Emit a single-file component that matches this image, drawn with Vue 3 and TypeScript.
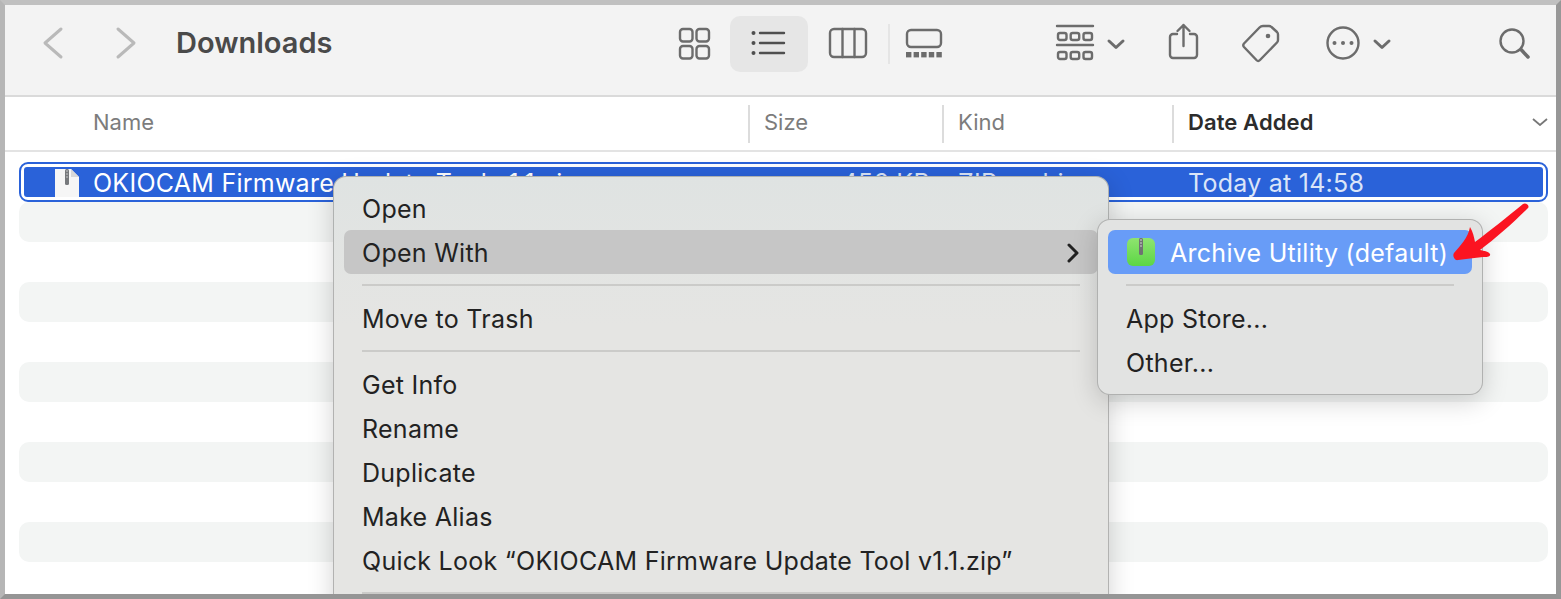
<script setup lang="ts">
type MenuEntry = { label?: string; active?: boolean; submenu?: boolean; separator?: boolean }

const menuItems: MenuEntry[] = [
  { label: 'Open' },
  { label: 'Open With', active: true, submenu: true },
  { separator: true },
  { label: 'Move to Trash' },
  { separator: true },
  { label: 'Get Info' },
  { label: 'Rename' },
  { label: 'Duplicate' },
  { label: 'Make Alias' },
  { label: 'Quick Look “OKIOCAM Firmware Update Tool v1.1.zip”' },
  { separator: true },
]

const emptyRows = Array.from({ length: 10 }, (_, i) => i)
</script>

<template>
  <div class="frame">
    <header class="toolbar">
      <svg class="ic nav-back" width="26" height="44" viewBox="0 0 26 44"><path d="M21 8 5 22l16 14" class="nav" /></svg>
      <svg class="ic nav-fwd" width="26" height="44" viewBox="0 0 26 44"><path d="m5 8 16 14L5 36" class="nav" /></svg>
      <h1 class="title">Downloads</h1>

      <svg class="ic t-grid" width="38" height="44" viewBox="0 0 38 44">
        <rect x="5" y="8" width="12.5" height="12.5" rx="3" />
        <rect x="21.5" y="8" width="12.5" height="12.5" rx="3" />
        <rect x="5" y="25" width="12.5" height="12.5" rx="3" />
        <rect x="21.5" y="25" width="12.5" height="12.5" rx="3" />
      </svg>
      <div class="list-btn">
        <svg class="ic dark" width="38" height="44" viewBox="0 0 38 44">
          <circle class="fill" cx="3.5" cy="11" r="2" />
          <circle class="fill" cx="3.5" cy="21" r="2" />
          <circle class="fill" cx="3.5" cy="31" r="2" />
          <path d="M10 11h24M10 21h24M10 31h24" />
        </svg>
      </div>
      <svg class="ic t-cols" width="46" height="44" viewBox="0 0 46 44">
        <rect x="5" y="8" width="36" height="28" rx="4" />
        <path d="M17.5 8v28M29.5 8v28" />
      </svg>
      <span class="tb-divider"></span>
      <svg class="ic t-gallery" width="46" height="44" viewBox="0 0 46 44">
        <rect x="6" y="9" width="34" height="17" rx="4" />
        <g class="fill">
          <rect x="5" y="31" width="5.4" height="5.4" />
          <rect x="12.6" y="31" width="5.4" height="5.4" />
          <rect x="20.2" y="31" width="5.4" height="5.4" />
          <rect x="27.8" y="31" width="5.4" height="5.4" />
          <rect x="35.4" y="31" width="5.4" height="5.4" />
        </g>
      </svg>

      <svg class="ic t-group" width="44" height="44" viewBox="0 0 44 44">
        <path d="M4 5h36M4 24h36" />
        <rect x="5" y="12" width="8.5" height="7" rx="2" />
        <rect x="17.7" y="12" width="8.5" height="7" rx="2" />
        <rect x="30.5" y="12" width="8.5" height="7" rx="2" />
        <rect x="5" y="31" width="8.5" height="7" rx="2" />
        <rect x="17.7" y="31" width="8.5" height="7" rx="2" />
        <rect x="30.5" y="31" width="8.5" height="7" rx="2" />
      </svg>
      <svg class="ic t-chev" width="24" height="44" viewBox="0 0 24 44"><path d="m5 20 7 6.5 7-6.5" class="chev" /></svg>

      <svg class="ic t-share" width="37" height="44" viewBox="0 0 37 44">
        <path d="M12 13H8a3 3 0 0 0-3 3v18a3 3 0 0 0 3 3h21a3 3 0 0 0 3-3V16a3 3 0 0 0-3-3h-4" />
        <path d="M18.5 25V4M12.5 10l6-6 6 6" />
      </svg>
      <svg class="ic t-tag" width="45" height="44" viewBox="0 0 45 44">
        <path d="M25 5h6q1.500 0 2.500 1l5.500 5q1 1 1 2.500V19q0 1.500-1 2.500L22 39q-1.800 1.800-3.600 0L6 26q-1.500-1.800 0-3.500L21.500 6.500Q23 5 25 5Z" />
        <circle class="fill" cx="30" cy="15" r="2.300" />
      </svg>
      <svg class="ic t-more" width="41" height="44" viewBox="0 0 41 44">
        <circle cx="21" cy="22" r="15.500" />
        <circle class="fill" cx="12.500" cy="22" r="2" />
        <circle class="fill" cx="21" cy="22" r="2" />
        <circle class="fill" cx="29.500" cy="22" r="2" />
      </svg>
      <svg class="ic t-chev2" width="24" height="44" viewBox="0 0 24 44"><path d="m5 20 7 6.500 7-6.500" class="chev" /></svg>
      <svg class="ic t-search" width="39" height="44" viewBox="0 0 39 44">
        <circle cx="17" cy="20" r="11.500" />
        <path d="m26 28.500 7 7.500" class="handle" />
      </svg>
    </header>

    <div class="columns">
      <div class="col col-name">Name</div>
      <div class="col col-size">Size</div>
      <div class="col col-kind">Kind</div>
      <div class="col col-date">
        <span>Date Added</span>
        <svg width="16" height="8" viewBox="0 0 16 8"><path d="m1 1 7 6 7-6" /></svg>
      </div>
    </div>

    <div class="list">
      <div class="selected">
        <div class="selected-bar">
          <div class="cell-name">
            <svg class="file" width="24" height="28" viewBox="0 0 24 28">
              <path d="M0 0h16l8 8v20H0Z" fill="#f6f6f6" />
              <path d="M16 0l8 8h-8Z" fill="#d8d8d8" />
              <rect x="10" y="0" width="4" height="16" rx="1.500" fill="#77797c" />
              <path d="M11 2h2M11 5h2M11 8h2" stroke="#c8c8c8" stroke-width="1" />
            </svg>
            <span>OKIOCAM Firmware Update Tool v1.1.zip</span>
          </div>
          <div class="cell-size">456 KB</div>
          <div class="cell-kind">ZIP archive</div>
          <div class="cell-date">Today at 14:58</div>
        </div>
      </div>
      <div v-for="i in emptyRows" :key="i" class="row" :class="{ stripe: i % 2 === 0 }"></div>
    </div>

    <div class="menu main-menu">
      <template v-for="(item, i) in menuItems" :key="i">
        <div v-if="item.separator" class="sep"></div>
        <div v-else class="item" :class="{ active: item.active }">
          <span>{{ item.label }}</span>
          <svg v-if="item.submenu" class="sub-arrow" width="14" height="20" viewBox="0 0 14 20"><path d="m3 2 8 8-8 8" /></svg>
        </div>
      </template>
    </div>

    <div class="menu sub-menu">
      <div class="item chosen">
        <svg class="zip" width="30" height="30" viewBox="0 0 30 30">
          <defs>
            <linearGradient id="zipGreen" x1="0" y1="0" x2="0" y2="1">
              <stop offset="0" stop-color="#8fe46f" />
              <stop offset="1" stop-color="#5cd645" />
            </linearGradient>
          </defs>
          <rect width="28" height="28" x="1" y="1" rx="6" fill="url(#zipGreen)" />
          <rect x="13" y="1" width="4" height="17" rx="1.500" fill="#6f7272" />
          <path d="M14 3h2M14 6h2M14 9h2" stroke="#cfcfcf" stroke-width="1" />
        </svg>
        <span class="chosen-label">Archive Utility (default)</span>
      </div>
      <div class="sep"></div>
      <div class="item">App Store...</div>
      <div class="item">Other...</div>
    </div>

    <svg class="arrow" width="84" height="66" viewBox="0 0 84 66">
      <path
        d="M4 53C10 46 18 38 20 27c3 5 4 10 5 15C40 31 58 16 73 4c3-2 7 2 5 4C63 23 46 38 30 50c4 1 8 1 10 4 1 3-4 3-7 3-9 1-17 2-25 3-3 1-6-4-4-7Z"
        fill="#fb1421"
      />
    </svg>
  </div>
</template>

<style>
html,
body {
  margin: 0;
  background: #fff;
}
</style>

<style scoped>
.frame {
  position: relative;
  box-sizing: border-box;
  width: 1561px;
  height: 599px;
  overflow: hidden;
  background: #fff;
  border-style: solid;
  border-width: 5px;
  border-color: #c0c0c0 #979797 #959595 #b6b6b6;
  font-family: Inter, "Liberation Sans", sans-serif;
}

/* toolbar */
.toolbar {
  display: flex;
  align-items: center;
  box-sizing: border-box;
  height: 92px;
  padding: 0 0 14px 35px;
  background: #f3f3f3;
  border-bottom: 2px solid #dadada;
}
.title {
  width: 491px;
  margin: 0 0 2px 37px;
  font-size: 29px;
  font-weight: 600;
  color: #4a4a4a;
}
.ic {
  flex: none;
  fill: none;
  stroke: #6c6c6c;
  stroke-width: 2.4;
  stroke-linecap: round;
  stroke-linejoin: round;
}
.ic .fill {
  fill: #6c6c6c;
  stroke: none;
}
.ic .nav {
  stroke: #b9b9b9;
  stroke-width: 3;
}
.ic .chev {
  stroke-width: 3;
}
.ic .handle {
  stroke-width: 3.5;
}
.ic.dark {
  stroke: #4f4f4f;
}
.ic.dark .fill {
  fill: #4f4f4f;
}
.nav-fwd { margin-left: 47px; }
.t-grid { margin-left: 8px; }
.list-btn {
  display: flex;
  flex: none;
  justify-content: center;
  align-items: center;
  width: 78px;
  height: 56px;
  margin: 2px 0 0 17px;
  box-sizing: border-box;
  border-radius: 10px;
  background: #e6e6e6;
}
.t-cols { margin-left: 17px; }
.tb-divider {
  flex: none;
  width: 2px;
  height: 40px;
  margin: 2px 0 0 17px;
  background: #e5e5e5;
}
.t-gallery { margin-left: 11px; }
.t-group { margin-left: 106px; }
.t-chev { margin-left: 7px; }
.t-share { margin-left: 37px; }
.t-tag { margin-left: 36px; }
.t-more { margin-left: 39px; }
.t-chev2 { margin-left: 7px; }
.t-search { margin-left: 101px; }

/* column headers */
.columns {
  display: grid;
  grid-template-columns: 743px 194px 230px 1fr;
  align-items: center;
  box-sizing: border-box;
  height: 55px;
  border-bottom: 2px solid #e3e3e3;
  font-size: 22px;
  color: #7c7c7c;
}
.col {
  display: flex;
  align-items: center;
  box-sizing: border-box;
  height: 38px;
  padding: 0 0 4px 14px;
  border-left: 2px solid #dcdcdc;
}
.col-name {
  padding-left: 88px;
  border-left: 0;
}
.col-date {
  justify-content: space-between;
  padding-right: 8px;
  font-weight: 600;
  letter-spacing: 0.1px;
  color: #2c2c2c;
}
.col-date svg {
  fill: none;
  stroke: #777;
  stroke-width: 1.800;
}

/* rows */
.list {
  display: flex;
  flex-direction: column;
  padding: 10px 8px 0 14px;
}
.selected {
  box-sizing: border-box;
  height: 40px;
  padding: 3px;
  border: 2px solid #2a62d9;
  border-radius: 9px;
}
.selected-bar {
  display: grid;
  grid-template-columns: 725px 181px 258px 1fr;
  align-items: center;
  height: 100%;
  border-radius: 3px;
  background: #2a62d9;
  font-size: 25px;
  letter-spacing: 0.25px;
  line-height: 32px;
  color: #fff;
  white-space: nowrap;
}
.cell-name {
  display: flex;
  align-items: center;
  gap: 14px;
  padding-left: 31px;
}
.file {
  flex: none;
}
.cell-size {
  text-align: right;
  color: #dbe5f8;
}
.cell-kind {
  padding-left: 28px;
  color: #dbe5f8;
}
.cell-date {
  color: #dbe5f8;
}
.row {
  flex: none;
  height: 40px;
  border-radius: 10px;
}
.stripe {
  background: #f3f5f4;
}

/* context menus */
.menu {
  position: absolute;
  box-sizing: border-box;
  padding: 10px 11px;
  border-radius: 13px;
  background: linear-gradient(#dfe3e2, #e5e5e3 30%);
  box-shadow:
    inset 0 0 0 1px rgba(0, 0, 0, 0.22),
    0 6px 26px rgba(0, 0, 0, 0.18);
  font-size: 25px;
  letter-spacing: 0.27px;
  color: #222;
}
.main-menu {
  left: 328px;
  top: 171px;
  width: 776px;
  height: 500px;
}
.sub-menu {
  left: 1092px;
  top: 214px;
  width: 386px;
  height: 176px;
  padding-top: 11px;
  background: #e2e3e2;
}
.item {
  display: flex;
  align-items: center;
  justify-content: space-between;
  box-sizing: border-box;
  height: 44px;
  padding: 1px 18px 0 18px;
  border-radius: 7px;
  white-space: nowrap;
}
.item.active {
  background: #c6c6c6;
}
.item.chosen {
  justify-content: flex-start;
  gap: 14px;
  padding: 0 0 0 18px;
  background: #689cf7;
  color: #fff;
}
.chosen-label {
  padding-top: 2px;
}
.sub-arrow {
  fill: none;
  stroke: #222;
  stroke-width: 3;
  stroke-linecap: round;
  stroke-linejoin: round;
}
.sep {
  height: 2px;
  margin: 10px 18px;
  background: #cbcbc9;
}
.arrow {
  position: absolute;
  left: 1445px;
  top: 195px;
}
</style>
